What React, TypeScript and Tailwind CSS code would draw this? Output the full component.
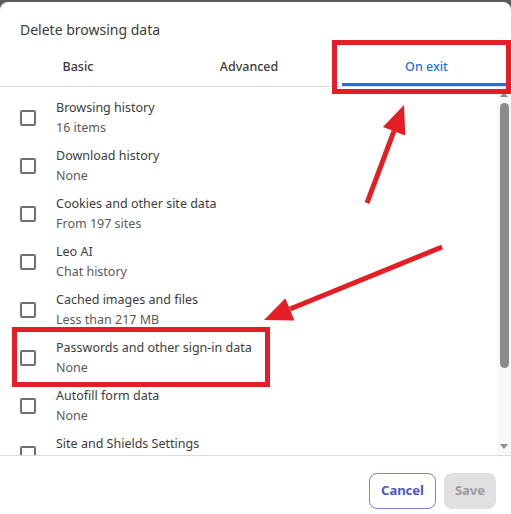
import React from "react";

const items: [string, string][] = [
  ["Browsing history", "16 items"],
  ["Download history", "None"],
  ["Cookies and other site data", "From 197 sites"],
  ["Leo AI", "Chat history"],
  ["Cached images and files", "Less than 217 MB"],
  ["Passwords and other sign-in data", "None"],
  ["Autofill form data", "None"],
  ["Site and Shields Settings", "None"],
];

export default function App() {
  return (
    <div
      className="relative w-[511px] h-[514px] bg-[#5c5c5c] pt-[2px] overflow-hidden"
      style={{ fontFamily: '"Noto Sans", "Open Sans", sans-serif' }}
    >
      <div className="flex flex-col h-[512px] bg-white rounded-t-[8px]">
        <div className="pl-[20px] pt-[18px] h-[46px] text-[14px] leading-[20px] text-[#3c3c3c]">
          Delete browsing data
        </div>
        <div className="flex h-[39px] border-b border-[#dadce0] text-[12.5px] font-medium">
          <div className="w-[156px] flex items-center justify-center text-[#3c3c3c]">Basic</div>
          <div className="w-[186px] flex items-center justify-center text-[#3c3c3c]">Advanced</div>
          <div className="relative flex-1 flex items-center justify-center text-[#1a73e8]">
            On exit
            <div className="absolute left-0 right-0 bottom-0 h-[3px] bg-[#1a73e8]" />
          </div>
        </div>
        <div className="flex h-[369px] border-b border-[#dadce0] overflow-hidden">
          <div className="flex-1 pt-[7px]">
            {items.map(([a, b]) => (
              <div key={a} className="flex items-center h-[48px] shrink-0">
                <div className="ml-[20px] w-[16px] h-[16px] border-2 border-[#6f6f6f] rounded-[2px]" />
                <div className="ml-[20px] text-[12.5px] leading-[20px]">
                  <div className="text-[#3c3c3c]">{a}</div>
                  <div className="text-[#5a5a5a]">{b}</div>
                </div>
              </div>
            ))}
          </div>
          <div className="w-[14px] bg-[#f8f8f8] flex flex-col items-center pt-[4px] pb-[5px]">
            <svg width="8" height="6" viewBox="0 0 8 6">
              <path d="M0 6 L4 1 L8 6 Z" fill="#8c8c8c" />
            </svg>
            <div className="mt-[6px] w-[9px] h-[265px] rounded-full bg-[#8c8c8c]" />
            <div className="flex-1" />
            <svg width="8" height="6" viewBox="0 0 8 6">
              <path d="M0 0 L8 0 L4 5 Z" fill="#8c8c8c" />
            </svg>
          </div>
        </div>
        <div className="flex justify-end gap-[8px] pt-[17px] pr-[15px]">
          <button className="w-[67px] h-[36px] rounded-[8px] border border-[#7b80e0] text-[13px] font-bold text-[#4c54d2]">
            Cancel
          </button>
          <button className="w-[52px] h-[36px] rounded-[8px] bg-[#e0e0e0] text-[13px] font-bold text-[#9b9b9b]">
            Save
          </button>
        </div>
      </div>

      <svg className="absolute left-0 top-0 pointer-events-none" width="511" height="514" viewBox="0 0 511 514">
        <rect x="334.5" y="42.5" width="174" height="49" fill="none" stroke="#e41e25" strokeWidth="5" />
        <rect x="14.5" y="329.5" width="253" height="55" fill="none" stroke="#e41e25" strokeWidth="5" />
        <line x1="367" y1="203" x2="394" y2="131" stroke="#e41e25" strokeWidth="5" />
        <polygon points="404,105 405.3,135.4 382.9,127" fill="#e41e25" />
        <line x1="442" y1="247" x2="290" y2="309" stroke="#e41e25" strokeWidth="5" />
        <polygon points="264,320 294.4,320.5 285.4,298.3" fill="#e41e25" />
      </svg>
    </div>
  );
}
